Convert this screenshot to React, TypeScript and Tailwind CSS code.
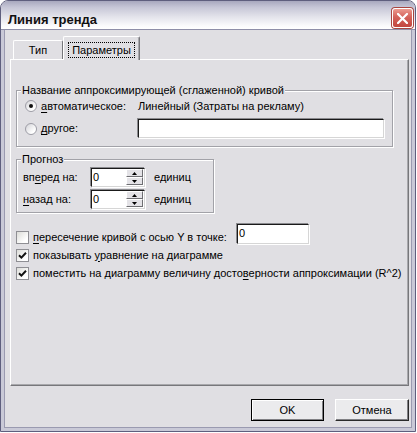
import React from "react";

const Radio = ({ checked }: { checked?: boolean }) => (
  <span className="w-[12px] h-[12px] shrink-0 rounded-full border border-[#9d9da6] bg-[linear-gradient(135deg,#d4d4d8,#ffffff_75%)] flex items-center justify-center">
    {checked && <span className="w-[4px] h-[4px] rounded-full bg-[#111]" />}
  </span>
);

const Check = ({ checked }: { checked?: boolean }) => (
  <span className="w-[13px] h-[13px] shrink-0 border border-[#8f8f94] bg-[linear-gradient(135deg,#dcdcd8,#ffffff_75%)] flex items-center justify-center">
    {checked && (
      <svg width="9" height="9" viewBox="0 0 9 9">
        <path d="M1 4.2 L3.4 6.6 L8 1.8" stroke="#111" strokeWidth="2" fill="none" />
      </svg>
    )}
  </span>
);

const sunken =
  "bg-white border border-t-[#1a1a1a] border-l-[#1a1a1a] border-r-[#d6d6d6] border-b-[#d6d6d6] shadow-[-1px_-1px_0_#8a8a8e,1px_1px_0_#ffffff]";

const SpinBtn = ({ up }: { up?: boolean }) => (
  <span className="h-[8px] flex items-center justify-center bg-[#e4e3e7] border border-t-white border-l-white border-r-[#6e6e72] border-b-[#6e6e72]">
    <svg width="5" height="3" viewBox="0 0 5 3">
      <path d={up ? "M2.5 0 L5 3 L0 3 Z" : "M0 0 L5 0 L2.5 3 Z"} fill="#000" />
    </svg>
  </span>
);

const Spin = () => (
  <div className={`w-[54px] h-[19px] flex ${sunken}`}>
    <span className="flex-1 pl-[1px] leading-[16px]">0</span>
    <div className="w-[18px] flex flex-col pr-[1px] pt-[0px]">
      <SpinBtn up />
      <SpinBtn />
    </div>
  </div>
);

const U = ({ children }: { children: React.ReactNode }) => (
  <span className="underline underline-offset-[2px]">{children}</span>
);

export default function App() {
  return (
    <div className="w-[417px] h-[433px] bg-white text-[11px] leading-[13px] text-black font-['Liberation_Sans',Arial,sans-serif]">
      <div className="w-[416px] h-[432px] flex flex-col rounded-t-[8px] border border-[#5f5f7e] overflow-hidden bg-[#e0dfe3]">
        {/* title bar */}
        <div className="h-[29px] shrink-0 flex items-start pl-[7px] pr-[2px] border-b border-[#8e8ea8] bg-[linear-gradient(to_bottom,#a8a8be_0%,#c6c6d6_22%,#e2e2ea_55%,#fafafc_88%,#ffffff_100%)]">
          <span className="mt-[11px] text-[13px] leading-[16px] font-bold text-[#111]">Линия тренда</span>
          <span className="ml-auto mt-[7px] w-[21px] h-[20px] rounded-[3px] border border-white shadow-[0_0_0_1px_#a9453f] bg-[linear-gradient(to_bottom,#ec9a8f,#d4625a_45%,#c2463f)] flex items-center justify-center">
            <svg width="11" height="11" viewBox="0 0 11 11">
              <path d="M1 1 L10 10 M10 1 L1 10" stroke="#fff" strokeWidth="2.2" strokeLinecap="square" />
            </svg>
          </span>
        </div>

        {/* body */}
        <div className="flex-1 border-x-[3px] border-b-[3px] border-[#c9c9d7]">
          <div className="h-full border-x border-b border-[#9a9ab0] pl-[5px] pt-[6px] flex flex-col">
            {/* tabs */}
            <div className="flex items-end h-[23px]">
              <div className="ml-[3px] w-[50px] h-[19px] border-t border-l border-white border-r border-r-[#77777b] rounded-t-[2px] flex items-center justify-center">
                Тип
              </div>
              <div className="relative z-10 -mb-[1px] w-[77px] h-[24px] bg-[#e0dfe3] border-t border-l border-white border-r border-r-[#77777b] rounded-t-[2px] shadow-[inset_-1px_0_0_#a8a8ac] flex items-start justify-center pt-[5px]">
                <span className="h-[16px] px-[3px] border border-dotted border-black leading-[14px]">Параметры</span>
              </div>
            </div>

            {/* panel */}
            <div className="w-[399px] h-[327px] border-t border-l border-white border-r border-b border-r-[#77777b] border-b-[#77777b] shadow-[inset_-1px_-1px_0_#a8a8ac] flex flex-col">
              <fieldset className="ml-[5px] mt-[24px] w-[377px] border border-[#a2a2a8] shadow-[inset_1px_1px_0_#ffffff,1px_1px_0_#ffffff] p-0">
                <legend className="ml-[4px] px-[1px] bg-[#e0dfe3] leading-[13px]">
                  Название аппроксимирующей (сглаженной) кривой
                </legend>
                <div className="pl-[8px] pb-[8px]">
                  <div className="h-[18px] flex items-center">
                    <Radio checked />
                    <span className="ml-[4px] w-[97px]">
                      <U>а</U>втоматическое:
                    </span>
                    <span>Линейный (Затраты на рекламу)</span>
                  </div>
                  <div className="mt-[4px] h-[19px] flex items-center">
                    <Radio />
                    <span className="ml-[4px] w-[97px]">
                      <U>д</U>ругое:
                    </span>
                    <span className={`w-[246px] h-[19px] ${sunken}`} />
                  </div>
                </div>
              </fieldset>

              <fieldset className="ml-[5px] mt-[6px] w-[198px] border border-[#a2a2a8] shadow-[inset_1px_1px_0_#ffffff,1px_1px_0_#ffffff] p-0">
                <legend className="ml-[4px] px-[1px] bg-[#e0dfe3] leading-[13px]">Прогноз</legend>
                <div className="pl-[6px] pt-[2px] pb-[3px]">
                  <div className="h-[19px] flex items-center">
                    <span className="w-[68px]">
                      вп<U>е</U>ред на:
                    </span>
                    <Spin />
                    <span className="ml-[9px]">единиц</span>
                  </div>
                  <div className="mt-[3px] h-[19px] flex items-center">
                    <span className="w-[68px]">
                      <U>н</U>азад на:
                    </span>
                    <Spin />
                    <span className="ml-[9px]">единиц</span>
                  </div>
                </div>
              </fieldset>

              <div className="ml-[5px] mt-[11px] flex flex-col">
                <div className="h-[22px] flex items-start">
                  <span className="mt-[7px]">
                    <Check />
                  </span>
                  <span className="ml-[4px] mt-[7px] w-[204px]">
                    <U>п</U>ересечение кривой с осью Y в точке:
                  </span>
                  <span className={`w-[72px] h-[20px] pl-[1px] leading-[16px] ${sunken}`}>0</span>
                </div>
                <div className="h-[18px] flex items-center">
                  <Check checked />
                  <span className="ml-[4px]">
                    показывать <U>у</U>равнение на диаграмме
                  </span>
                </div>
                <div className="h-[18px] flex items-center">
                  <Check checked />
                  <span className="ml-[4px]">
                    поместить на диаграмму величину досто<U>в</U>ерности аппроксимации (R^2)
                  </span>
                </div>
              </div>
            </div>

            {/* buttons */}
            <div className="mt-[13px] w-[399px] flex justify-end gap-[11px]">
              <button className="w-[73px] h-[22px] bg-[#ebebed] border border-black shadow-[inset_1px_1px_0_#ffffff,inset_-1px_-1px_0_#808084]">
                OK
              </button>
              <button className="w-[74px] h-[22px] bg-[#ebebed] border border-t-white border-l-white border-r-[#2a2a2a] border-b-[#2a2a2a] shadow-[inset_-1px_-1px_0_#808084]">
                Отмена
              </button>
            </div>
          </div>
        </div>
      </div>
    </div>
  );
}
